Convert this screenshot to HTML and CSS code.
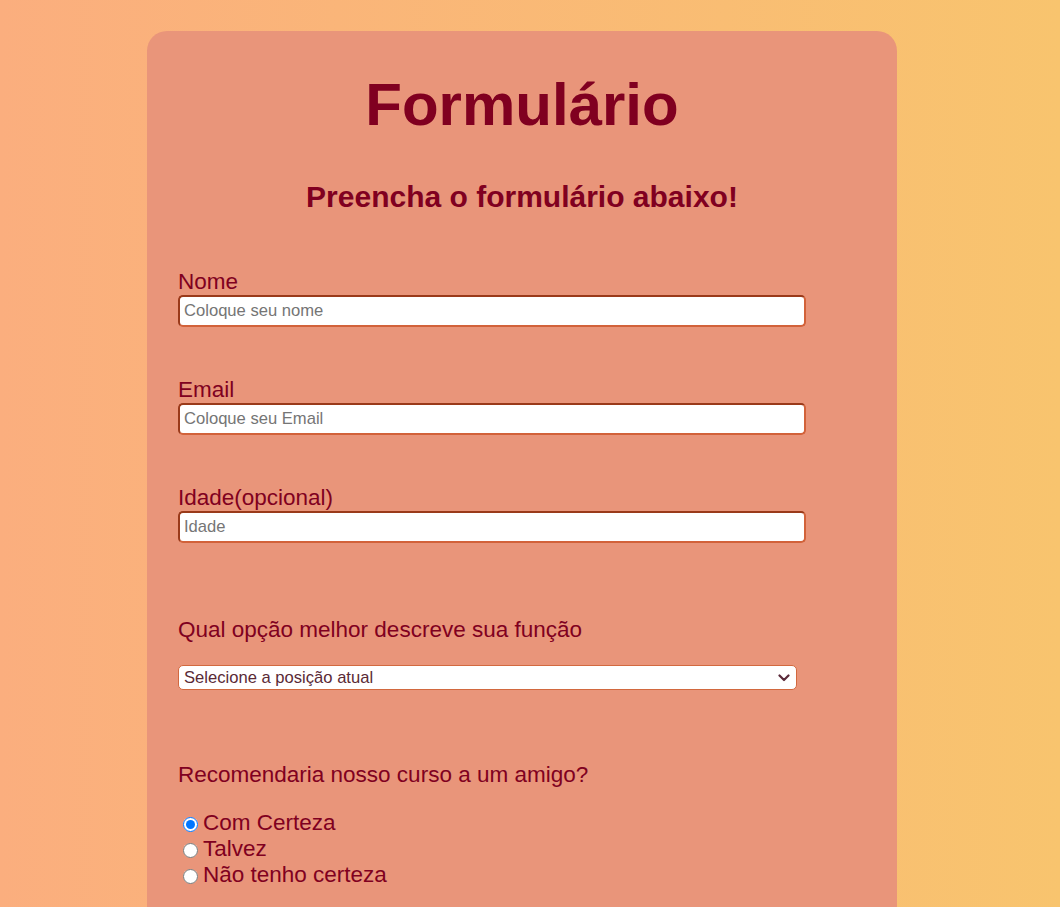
FILE: index.html
```html
<!DOCTYPE html>
<html lang="pt-BR">
<head>
<meta charset="utf-8">
<title>Formulário</title>
<link rel="stylesheet" href="styles.css">
</head>
<body>
<div class="page">
  <main class="card">
    <h1 class="title">Formulário</h1>
    <p class="subtitle">Preencha o formulário abaixo!</p>
    <form class="form">
      <div class="field">
        <label class="label" for="nome">Nome</label>
        <input class="text-input" id="nome" type="text" placeholder="Coloque seu nome">
      </div>
      <div class="field">
        <label class="label" for="email">Email</label>
        <input class="text-input" id="email" type="email" placeholder="Coloque seu Email">
      </div>
      <div class="field">
        <label class="label" for="idade">Idade(opcional)</label>
        <input class="text-input" id="idade" type="number" placeholder="Idade">
      </div>
      <div class="field field-wide">
        <label class="label label-spaced" for="funcao">Qual opção melhor descreve sua função</label>
        <select class="select" id="funcao">
          <option>Selecione a posição atual</option>
          <option>Estudante</option>
          <option>Profissional</option>
        </select>
      </div>
      <div class="field field-wide">
        <p class="label label-spaced">Recomendaria nosso curso a um amigo?</p>
        <div class="radio-row"><input class="radio" type="radio" name="rec" id="r1" checked><label class="radio-label" for="r1">Com Certeza</label></div>
        <div class="radio-row"><input class="radio" type="radio" name="rec" id="r2"><label class="radio-label" for="r2">Talvez</label></div>
        <div class="radio-row"><input class="radio" type="radio" name="rec" id="r3"><label class="radio-label" for="r3">Não tenho certeza</label></div>
      </div>
    </form>
  </main>
</div>
</body>
</html>
```

FILE: styles.css
```css
html, body {
  margin: 0;
  padding: 0;
}
body {
  background: linear-gradient(to right, #fbae7e, #f8c46e);
  min-height: 100vh;
  font-family: "Liberation Sans", Arial, sans-serif;
  color: #800020;
}
.page {
  padding: 31px 16px 0 0;
}
.card {
  box-sizing: border-box;
  width: 750px;
  margin: 0 auto;
  background: #e9957a;
  border-radius: 20px;
  padding: 39px 31px 60px;
}
.title {
  margin: 0;
  font-size: 60px;
  line-height: 69px;
  font-weight: bold;
  text-align: center;
  color: #800020;
}
.subtitle {
  margin: 41px 0 0;
  font-size: 30px;
  line-height: 34px;
  font-weight: bold;
  text-align: center;
  color: #800020;
}
.form {
  margin-top: 55px;
}
.field {
  margin-bottom: 50px;
}
.field-wide {
  margin-top: 74px;
  margin-bottom: 0;
}
.field-wide + .field-wide {
  margin-top: 72px;
}
.label {
  display: block;
  margin: 0;
  font-size: 22.5px;
  line-height: 26px;
  color: #800020;
}
.label-spaced {
  margin-bottom: 22px;
}
.text-input {
  display: block;
  box-sizing: border-box;
  width: 628px;
  height: 32px;
  margin: 0;
  padding: 5px 4px;
  font-family: "Liberation Sans", Arial, sans-serif;
  font-size: 16.6px;
  background: #fff;
  border: 2px solid;
  border-color: #9a3a1a #d2623a #d2623a #9a3a1a;
  border-radius: 5px;
  outline: none;
}
.text-input::placeholder {
  color: #757575;
}
.text-input::-webkit-outer-spin-button,
.text-input::-webkit-inner-spin-button {
  -webkit-appearance: none;
  margin: 0;
}
.select {
  display: block;
  box-sizing: border-box;
  width: 619px;
  height: 25px;
  margin: 0;
  padding: 0 24px 0 5px;
  font-family: "Liberation Sans", Arial, sans-serif;
  font-size: 16.6px;
  color: #5a2a36;
  -webkit-appearance: none;
  appearance: none;
  background-color: #fff;
  background-image: url("data:image/svg+xml;utf8,<svg xmlns='http://www.w3.org/2000/svg' width='12' height='8' viewBox='0 0 12 8'><path d='M1.5 1.5 L6 6 L10.5 1.5' fill='none' stroke='%235a2a3a' stroke-width='2.2' stroke-linecap='round' stroke-linejoin='round'/></svg>");
  background-repeat: no-repeat;
  background-position: right 6px center;
  background-size: 12px 8px;
  border: 1px solid #d2693f;
  border-radius: 5px;
}
.radio-row {
  display: flex;
  align-items: center;
  height: 26px;
}
.radio {
  width: 15px;
  height: 15px;
  margin: 3px 5px 0 5px;
}
.radio-label {
  font-size: 22.5px;
  line-height: 26px;
  color: #800020;
}
```
